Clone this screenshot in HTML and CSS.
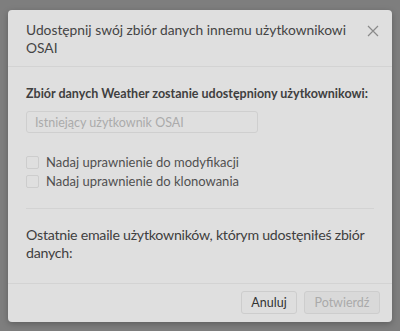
FILE: index.html
```html
<!DOCTYPE html>
<html lang="pl">
<head>
  <meta charset="UTF-8" />
  <meta name="viewport" content="width=device-width, initial-scale=1.0"/>
  <title>Udostępnij zbiór danych</title>
  <link rel="stylesheet" href="styles.css">
</head>
<body>

  <div class="backdrop">
    <div class="modal">
      <div class="modal-header">
        <div class="modal-title">Udostępnij swój zbiór danych innemu użytkownikowi OSAI</div>
        <span class="close-btn">
          <svg width="12" height="12" viewBox="0 0 12 12">
            <path d="M1 1 L11 11 M11 1 L1 11" stroke="#8a8a8a" stroke-width="1.2" fill="none"/>
          </svg>
        </span>
      </div>

      <div class="modal-body">
        <div class="share-label">Zbiór danych Weather zostanie udostępniony użytkownikowi:</div>
        <input class="user-input" type="text" placeholder="Istniejący użytkownik OSAI" />

        <div class="checks">
          <label class="check-row"><span class="box"></span>Nadaj uprawnienie do modyfikacji</label>
          <label class="check-row"><span class="box"></span>Nadaj uprawnienie do klonowania</label>
        </div>

        <hr class="divider">

        <div class="recent-title">Ostatnie emaile użytkowników, którym udostęniłeś zbiór danych:</div>
      </div>

      <div class="modal-footer">
        <button class="btn btn-cancel">Anuluj</button>
        <button class="btn btn-confirm" disabled>Potwierdź</button>
      </div>
    </div>
  </div>

</body>
</html>
```

FILE: styles.css
```css
body {
  margin: 0;
  padding: 0;
  font-family: Lato, "Open Sans", sans-serif;
  background-color: #7e7e7e;
  width: 400px;
  height: 331px;
  overflow: hidden;
}

.backdrop {
  padding: 10px 8px 0 8px;
}

.modal {
  background-color: #dfdfdf;
  border-radius: 4px;
  height: 312px;
  display: flex;
  flex-direction: column;
  box-shadow: 0 2px 6px rgba(0,0,0,0.25);
}

.modal-header {
  display: flex;
  justify-content: space-between;
  align-items: flex-start;
  padding: 11px 13px 9px 18px;
  border-bottom: 1px solid #d3d3d3;
}

.modal-title {
  font-size: 13.8px;
  line-height: 18px;
  color: #444;
  width: 334px;
}

.close-btn {
  margin-top: 0;
  width: 12px;
  height: 12px;
}

.modal-body {
  flex: 1;
  padding: 18px 18px 0 18px;
}

.share-label {
  font-size: 12.5px;
  line-height: 18px;
  font-weight: bold;
  color: #404040;
}

.user-input {
  display: block;
  box-sizing: border-box;
  width: 232px;
  height: 22px;
  margin-top: 8px;
  padding: 0 8px;
  border: 1px solid #cfcfcf;
  border-radius: 3px;
  background: #dfdfdf;
  font-family: inherit;
  font-size: 12.5px;
}

.user-input::placeholder {
  color: #ababab;
}

.checks {
  margin-top: 20px;
}

.check-row {
  display: flex;
  align-items: center;
  font-size: 13px;
  line-height: 19px;
  color: #505050;
}

.box {
  width: 11px;
  height: 11px;
  border: 1px solid #cdcdcd;
  border-radius: 2px;
  margin-right: 7px;
}

.divider {
  border: none;
  border-top: 1px solid #d3d3d3;
  margin: 17px 0 0 0;
}

.recent-title {
  margin-top: 17px;
  font-size: 14.2px;
  letter-spacing: -0.25px;
  line-height: 18px;
  color: #404040;
}

.modal-footer {
  display: flex;
  justify-content: flex-end;
  gap: 7px;
  padding: 7px 12px 8px 12px;
  border-top: 1px solid #d3d3d3;
}

.btn {
  font-family: inherit;
  font-size: 12.5px;
  height: 23px;
  padding: 0;
  border: 1px solid #cdcdcd;
  border-radius: 3px;
  background: #dedede;
  color: #333;
}

.btn-cancel {
  width: 56px;
}

.btn-confirm {
  width: 76px;
}

.btn:disabled {
  color: #aaa;
  background: #d9d9d9;
}
```
